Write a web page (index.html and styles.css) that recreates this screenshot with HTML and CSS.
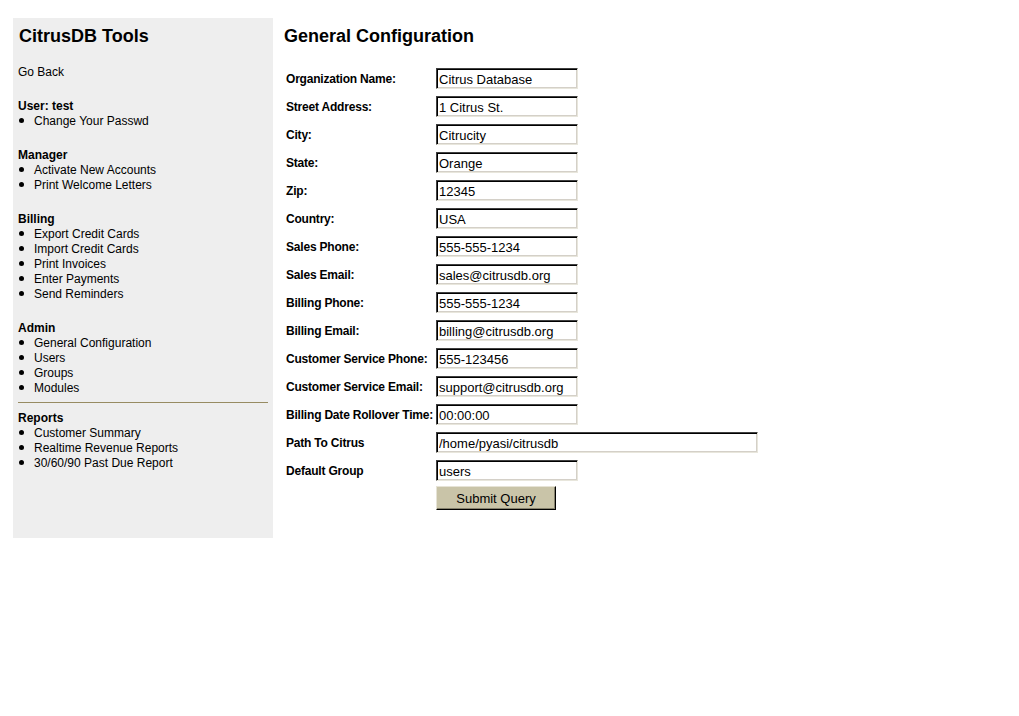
FILE: index.html
```html
<!DOCTYPE html>
<html>
<head>
<meta charset="utf-8">
<title>CitrusDB - General Configuration</title>
<link rel="stylesheet" href="styles.css">
</head>
<body>
<div class="page">
  <aside class="sidebar">
    <h1 class="side-title">CitrusDB Tools</h1>
    <div class="side-block"><a class="side-link" href="#">Go Back</a></div>
    <div class="side-block">
      <div class="side-head">User: test</div>
      <ul class="side-list">
        <li>Change Your Passwd</li>
      </ul>
    </div>
    <div class="side-block">
      <div class="side-head">Manager</div>
      <ul class="side-list">
        <li>Activate New Accounts</li>
        <li>Print Welcome Letters</li>
      </ul>
    </div>
    <div class="side-block">
      <div class="side-head">Billing</div>
      <ul class="side-list">
        <li>Export Credit Cards</li>
        <li>Import Credit Cards</li>
        <li>Print Invoices</li>
        <li>Enter Payments</li>
        <li>Send Reminders</li>
      </ul>
    </div>
    <div class="side-block">
      <div class="side-head">Admin</div>
      <ul class="side-list">
        <li>General Configuration</li>
        <li>Users</li>
        <li>Groups</li>
        <li>Modules</li>
      </ul>
      <div class="side-rule"></div>
      <div class="side-head">Reports</div>
      <ul class="side-list">
        <li>Customer Summary</li>
        <li>Realtime Revenue Reports</li>
        <li>30/60/90 Past Due Report</li>
      </ul>
    </div>
  </aside>
  <main class="content">
    <h2 class="content-title">General Configuration</h2>
    <form class="config">
      <label class="cfg-label">Organization Name:</label><input class="cfg-input" type="text" value="Citrus Database">
      <label class="cfg-label">Street Address:</label><input class="cfg-input" type="text" value="1 Citrus St.">
      <label class="cfg-label">City:</label><input class="cfg-input" type="text" value="Citrucity">
      <label class="cfg-label">State:</label><input class="cfg-input" type="text" value="Orange">
      <label class="cfg-label">Zip:</label><input class="cfg-input" type="text" value="12345">
      <label class="cfg-label">Country:</label><input class="cfg-input" type="text" value="USA">
      <label class="cfg-label">Sales Phone:</label><input class="cfg-input" type="text" value="555-555-1234">
      <label class="cfg-label">Sales Email:</label><input class="cfg-input" type="text" value="sales@citrusdb.org">
      <label class="cfg-label">Billing Phone:</label><input class="cfg-input" type="text" value="555-555-1234">
      <label class="cfg-label">Billing Email:</label><input class="cfg-input" type="text" value="billing@citrusdb.org">
      <label class="cfg-label">Customer Service Phone:</label><input class="cfg-input" type="text" value="555-123456">
      <label class="cfg-label">Customer Service Email:</label><input class="cfg-input" type="text" value="support@citrusdb.org">
      <label class="cfg-label">Billing Date Rollover Time:</label><input class="cfg-input" type="text" value="00:00:00">
      <label class="cfg-label">Path To Citrus</label><input class="cfg-input cfg-wide" type="text" value="/home/pyasi/citrusdb">
      <label class="cfg-label">Default Group</label><input class="cfg-input" type="text" value="users">
      <span></span><button class="cfg-submit" type="button">Submit Query</button>
    </form>
  </main>
</div>
</body>
</html>
```

FILE: styles.css
```css
html, body {
  margin: 0;
  padding: 0;
  background: #ffffff;
}

body {
  font-family: "Liberation Sans", Arial, sans-serif;
  color: #000000;
}

.page {
  display: flex;
  align-items: flex-start;
  padding: 18px 0 0 13px;
}

.sidebar {
  width: 260px;
  height: 520px;
  box-sizing: border-box;
  background: #eeeeee;
  padding: 7px 5px 0 5px;
  display: flex;
  flex-direction: column;
  gap: 19px;
  font-size: 12px;
  line-height: 15px;
}

.side-title {
  margin: 1px 0 -1px 0;
  font-size: 18px;
  line-height: 21px;
  font-weight: bold;
  padding-left: 1px;
}

.side-link {
  color: #000000;
  text-decoration: none;
}

.side-head {
  font-weight: bold;
}

.side-list {
  list-style: none;
  margin: 0;
  padding: 0;
}

.side-list li::before {
  content: "";
  display: inline-block;
  width: 5px;
  height: 5px;
  border-radius: 50%;
  background: #000000;
  margin: 0 10px 0 1px;
  vertical-align: 2px;
}

.side-rule {
  height: 1px;
  background: #978b62;
  margin: 6px 0 8px 0;
}

.content {
  padding: 8px 0 0 11px;
}

.content-title {
  margin: 0;
  font-size: 18px;
  line-height: 21px;
  font-weight: bold;
}

.config {
  display: grid;
  grid-template-columns: 150px auto;
  grid-auto-rows: 21px;
  row-gap: 7px;
  align-items: center;
  justify-items: start;
  margin: 21px 0 0 2px;
}

.cfg-label {
  font-size: 12px;
  font-weight: bold;
  line-height: 15px;
  letter-spacing: -0.2px;
  margin-top: 2px;
}

.cfg-input {
  box-sizing: border-box;
  width: 142px;
  height: 21px;
  margin: 0;
  padding: 1px 2px 0 2px;
  font-family: "Liberation Sans", Arial, sans-serif;
  font-size: 13px;
  color: #000000;
  background: #ffffff;
  border: 1px solid;
  border-color: #404040 #e8e6dc #e8e6dc #404040;
  box-shadow: inset 1px 1px 0 #000000, inset -1px -1px 0 #d4d0c8;
  outline: none;
}

.cfg-wide {
  width: 322px;
}

.cfg-submit {
  box-sizing: border-box;
  width: 120px;
  height: 24px;
  margin: -1px 0 0 0;
  padding: 0;
  font-family: "Liberation Sans", Arial, sans-serif;
  font-size: 13px;
  color: #000000;
  background: #c9c4a8;
  border: 1px solid;
  border-color: #e6e3d6 #000000 #000000 #e6e3d6;
  box-shadow: inset -1px -1px 0 #86826e;
}
```
